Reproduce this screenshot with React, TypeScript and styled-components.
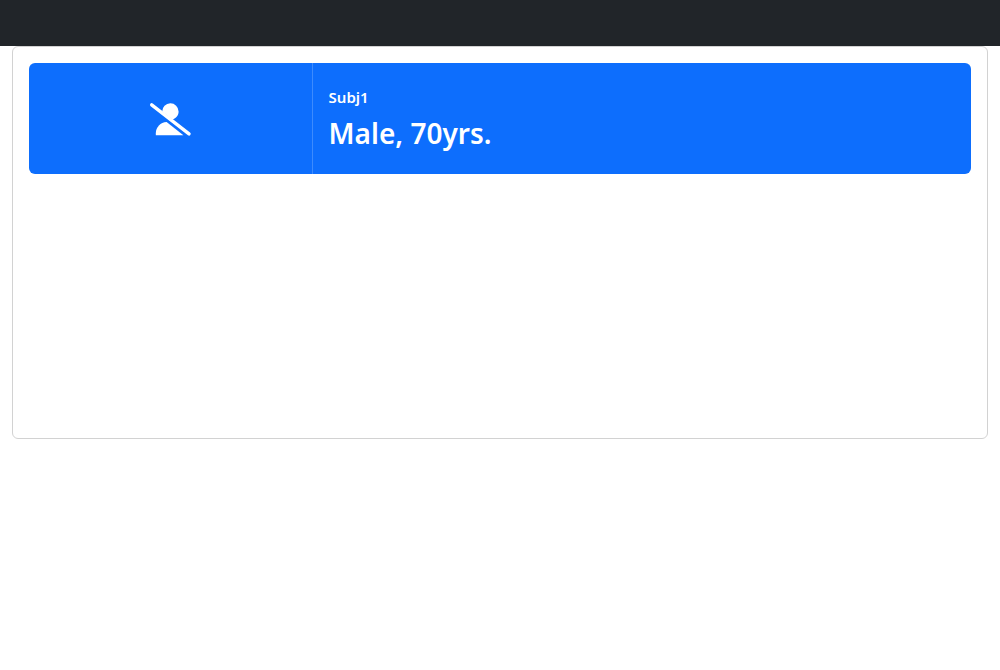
import React from 'react';
import styled, { createGlobalStyle } from 'styled-components';

const GlobalStyle = createGlobalStyle`
  *, *::before, *::after { box-sizing: border-box; }
  body {
    margin: 0;
    background: #fff;
    color: #212529;
    font-family: "Segoe UI", "Noto Sans", "Open Sans", sans-serif;
    font-size: 16px;
    line-height: 24px;
  }
`;

const NavBar = styled.header`
  height: 46px;
  background: #212529;
`;

const Container = styled.main`
  padding: 0 12px;
`;

const Panel = styled.section`
  min-height: 393px;
  padding: 16px;
  border: 1px solid #d2d2d2;
  border-radius: 6px;
`;

const SubjectCard = styled.article`
  display: grid;
  grid-template-columns: 3fr 7fr;
  min-height: 111px;
  border-radius: 6px;
  background: #0d6efd;
  color: #fff;
`;

const Avatar = styled.div`
  display: flex;
  align-items: center;
  justify-content: center;
`;

const UserSlashIcon = styled.svg`
  width: 40px;
  height: 32px;
  overflow: visible;
  fill: currentColor;
`;

const Details = styled.div`
  display: flex;
  flex-direction: column;
  justify-content: center;
  padding: 16px;
  border-left: 1px solid #3d8bfd;
`;

const SubjectName = styled.h2`
  margin: 0;
  font-size: 15px;
  line-height: 20px;
  font-weight: 600;
`;

const Summary = styled.p`
  margin: 8px 0 0;
  font-size: 28px;
  line-height: 36px;
  font-weight: 600;
`;

export default function App() {
  return (
    <>
      <GlobalStyle />
      <NavBar />
      <Container>
        <Panel>
          <SubjectCard>
            <Avatar>
              <UserSlashIcon viewBox="0 0 40 32" aria-hidden="true">
                <path d="M12.2 8.6A8.2 8.2 0 0 1 28.6 8.4C28.6 12.2 26 15.3 22.5 16.4Z" />
                <path d="M5.8 32.3V30.2C5.8 24.3 10.5 19.3 16.6 19L33.4 32.3Z" />
                <path d="M1.7 1.8L39 30.9" stroke="currentColor" strokeWidth="3.4" strokeLinecap="round" />
              </UserSlashIcon>
            </Avatar>
            <Details>
              <SubjectName>Subj1</SubjectName>
              <Summary>Male, 70yrs.</Summary>
            </Details>
          </SubjectCard>
        </Panel>
      </Container>
    </>
  );
}
